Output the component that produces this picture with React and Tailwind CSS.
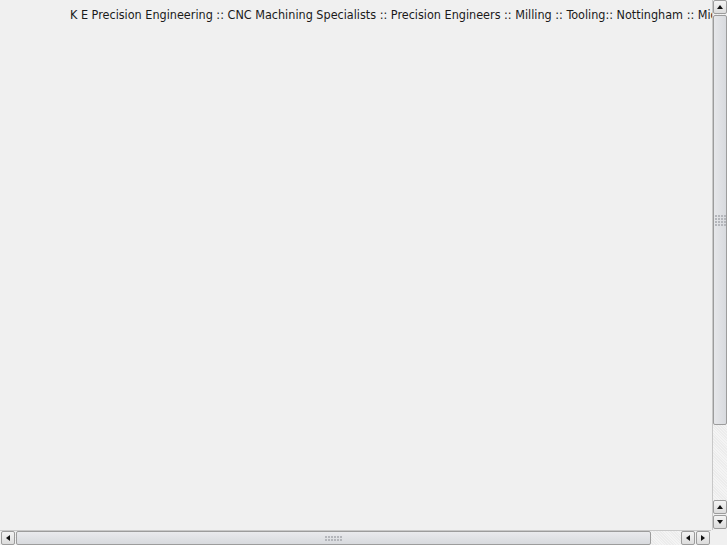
import React from "react";

const Grip = ({ cols, rows }) => (
  <div className={`grid gap-[1px] ${cols === 4 ? "grid-cols-4" : "grid-cols-6"}`}>
    {Array.from({ length: cols * rows }).map((_, i) => (
      <span key={i} className="w-[2px] h-[2px] bg-[#b4b6bb]" />
    ))}
  </div>
);

const ArrowBtn = ({ dir }) => {
  const paths = {
    up: "M1 5 L4 1 L7 5 Z",
    down: "M1 1 L4 5 L7 1 Z",
    left: "M5 1 L1 4 L5 7 Z",
    right: "M1 1 L5 4 L1 7 Z",
  };
  const horiz = dir === "left" || dir === "right";
  return (
    <div className="w-[14px] h-[14px] flex items-center justify-center border border-[#9c9c9c] rounded-[2px] bg-gradient-to-b from-[#f4f4f4] to-[#dcdcdc] shrink-0">
      <svg width={horiz ? 6 : 8} height={horiz ? 8 : 6} viewBox={horiz ? "0 0 6 8" : "0 0 8 6"}>
        <path d={paths[dir]} fill="#111" />
      </svg>
    </div>
  );
};

export default function App() {
  return (
    <div className="w-[727px] h-[545px] flex flex-col bg-[#f0f0f0] overflow-hidden" style={{ fontFamily: '"DejaVu Sans Condensed", "DejaVu Sans", sans-serif' }}>
      <div className="flex flex-1 min-h-0">
        {/* page */}
        <div className="flex-1 overflow-hidden pl-[70px] pt-[6px]">
          <p className="whitespace-nowrap text-[12.5px] text-[#1a1a1a] leading-[18px]">
            K E Precision Engineering :: CNC Machining Specialists :: Precision Engineers :: Milling :: Tooling:: Nottingham :: Midlands
          </p>
        </div>
        {/* vertical scrollbar */}
        <div className="w-[15px] flex flex-col bg-[#f0f0f0] border-l border-[#c8c8c8]">
          <ArrowBtn dir="up" />
          <div className="flex-1 flex flex-col bg-[repeating-linear-gradient(45deg,#f4f4f4_0,#f4f4f4_1px,#ececec_1px,#ececec_2px)]">
            <div className="h-[410px] mt-[1px] border border-[#9c9c9c] rounded-[2px] bg-gradient-to-r from-[#e6e7ea] to-[#d8dade] flex items-center justify-center">
              <Grip cols={4} rows={4} />
            </div>
          </div>
          <div className="mb-[1px] flex flex-col gap-[1px]">
            <ArrowBtn dir="up" />
            <ArrowBtn dir="down" />
          </div>
        </div>
      </div>
      {/* horizontal scrollbar */}
      <div className="h-[15px] flex">
        <div className="flex-1 flex items-center border-t border-[#c8c8c8] bg-[#f0f0f0] pl-[1px]">
          <ArrowBtn dir="left" />
          <div className="flex-1 flex h-[14px] bg-[repeating-linear-gradient(45deg,#f4f4f4_0,#f4f4f4_1px,#ececec_1px,#ececec_2px)]">
            <div className="w-[635px] ml-[1px] border border-[#9c9c9c] rounded-[2px] bg-gradient-to-b from-[#e9eaed] to-[#d8dade] flex items-center justify-center">
              <Grip cols={6} rows={2} />
            </div>
          </div>
          <div className="flex gap-[1px] mr-[1px]">
            <ArrowBtn dir="left" />
            <ArrowBtn dir="right" />
          </div>
        </div>
        <div className="w-[16px] bg-[#f0f0f0]" />
      </div>
    </div>
  );
}
